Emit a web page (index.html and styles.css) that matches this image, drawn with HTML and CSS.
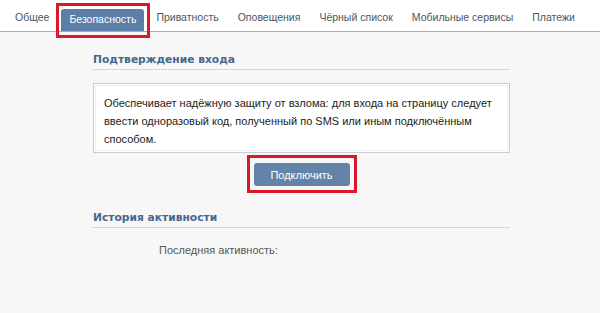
FILE: index.html
```html
<!DOCTYPE html>
<html lang="ru">
<head>
    <meta charset="UTF-8">
    <title>Настройки</title>
    <link rel="stylesheet" href="styles.css">
</head>
<body>
    <div class="tabs">
        <a class="tab">Общее</a>
        <a class="tab active">Безопасность</a>
        <a class="tab">Приватность</a>
        <a class="tab">Оповещения</a>
        <a class="tab">Чёрный список</a>
        <a class="tab">Мобильные сервисы</a>
        <a class="tab">Платежи</a>
    </div>
    <div class="content">
        <div class="section">
            <h2>Подтверждение входа</h2>
            <div class="info-box">
                Обеспечивает надёжную защиту от взлома: для входа на страницу следует<br>
                ввести одноразовый код, полученный по SMS или иным подключённым<br>
                способом.
            </div>
            <div class="button-row">
                <button class="connect-btn">Подключить</button>
            </div>
        </div>
        <div class="section">
            <h2>История активности</h2>
            <div class="activity">Последняя активность:</div>
        </div>
    </div>
</body>
</html>
```

FILE: styles.css
```css
body {
    margin: 0;
    font-family: 'Liberation Sans', Arial, sans-serif;
    font-size: 11px;
    background-color: #f7f7f7;
    color: #000;
}
.tabs {
    display: flex;
    align-items: flex-end;
    gap: 5px;
    height: 31px;
    padding-left: 8px;
    background-color: #fff;
    border-bottom: 1px solid #9eadbd;
}
.tab {
    position: relative;
    padding: 0 7px 7px;
    color: #4a5663;
    font-size: 10.5px;
    line-height: 13px;
    white-space: nowrap;
}
.tab.active {
    background-color: #5b7fa6;
    color: #fff;
    padding: 4px 8px 5px;
    border-radius: 3px 3px 0 0;
}
.tab.active::after {
    content: '';
    position: absolute;
    top: -6px;
    bottom: -7px;
    left: -5px;
    right: -6px;
    border: 3px solid #d9182b;
}
.content {
    width: 417px;
    margin-left: 93px;
    padding-top: 20px;
}
.section h2 {
    margin: 0;
    padding: 0 0 1px;
    font-family: 'DejaVu Sans', sans-serif;
    font-size: 10.7px;
    font-weight: bold;
    color: #45688e;
    border-bottom: 1px solid #d5d9de;
    line-height: 16px;
}
.info-box {
    margin-top: 13px;
    padding: 10px 10px 4px;
    background-color: #fff;
    border: 1px solid #c9ccd0;
    box-shadow: inset 0 0 0 1px #fff, inset 0 0 0 2px #eeeeee;
    font-size: 11px;
    line-height: 18px;
    color: #222;
}
.button-row {
    display: flex;
    justify-content: center;
    padding-top: 10px;
}
.connect-btn {
    position: relative;
    width: 96px;
    height: 23px;
    padding: 0;
    background-color: #6383a8;
    border: none;
    border-radius: 3px;
    color: #fff;
    font-family: 'Liberation Sans', sans-serif;
    font-size: 11px;
}
.connect-btn::after {
    content: '';
    position: absolute;
    top: -8px;
    bottom: -7px;
    left: -7px;
    right: -7px;
    border: 3px solid #d9182b;
}
.section + .section {
    margin-top: 24px;
}
.activity {
    padding: 16px 0 0 66px;
    line-height: 13px;
    color: #555;
}
```
